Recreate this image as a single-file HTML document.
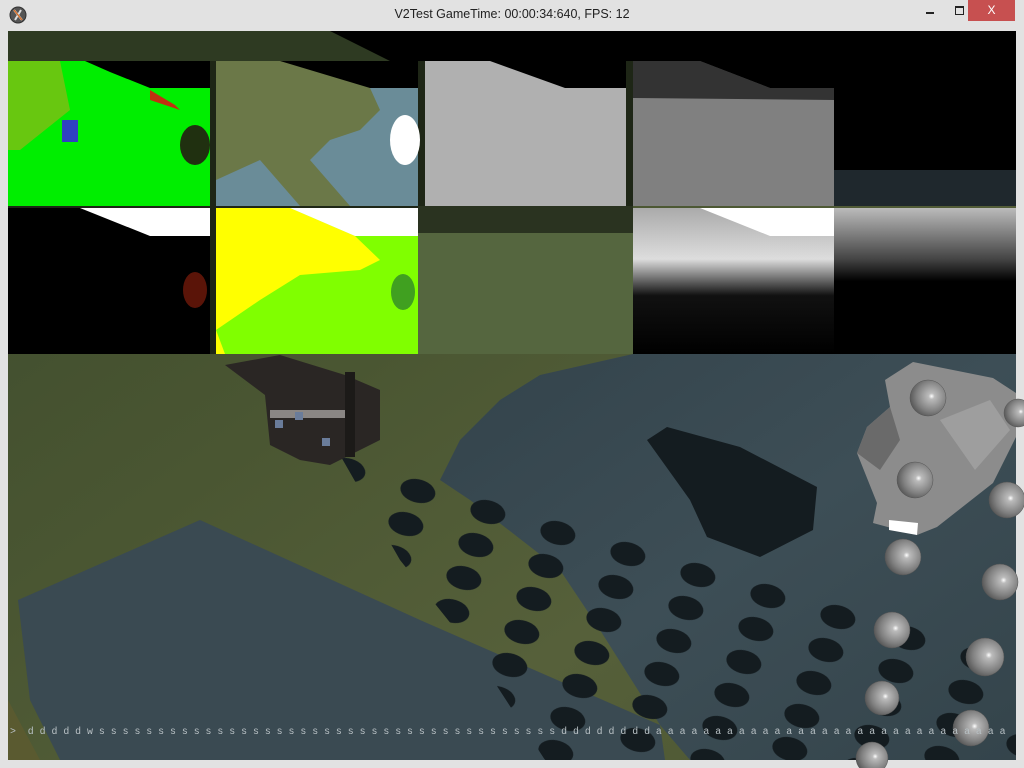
<!DOCTYPE html>
<html><head><meta charset="utf-8"><style>
html,body{margin:0;padding:0;width:1024px;height:768px;overflow:hidden;background:#e2e2e2;font-family:"Liberation Sans",sans-serif}
#title{position:absolute;left:0;top:0;width:1024px;height:31px;background:#e2e2e2;}
#title .t{position:absolute;left:0;width:1024px;top:7px;text-align:center;font-size:12.5px;color:#222}
#close{position:absolute;left:968px;top:0;width:47px;height:21px;background:#c75050;color:#fff;font-size:12px;text-align:center;line-height:21px}
#cmd{position:absolute;left:10px;top:726px;font-family:"Liberation Mono",monospace;font-size:9.9px;color:#b8c0c4;white-space:pre;letter-spacing:0}
</style></head><body>
<div id="title">
<svg width="20" height="20" style="position:absolute;left:9px;top:6px"><circle cx="9" cy="9" r="8" fill="#555"/><circle cx="9" cy="9" r="8" fill="none" stroke="#333"/><path d="M5 4 L13 14 M12 4 L6 14" stroke="#ddd" stroke-width="2"/><path d="M5 4 L13 14" stroke="#d86a20" stroke-width="1.4"/></svg>
<div class="t">V2Test GameTime: 00:00:34:640, FPS: 12</div>
<div style="position:absolute;left:926px;top:12px;width:8px;height:2px;background:#222"></div>
<div style="position:absolute;left:955px;top:6px;width:7px;height:6px;border:1px solid #222;border-top-width:2px"></div>
<div id="close">X</div>
</div>
<svg width="1024" height="768" style="position:absolute;left:0;top:0" xmlns="http://www.w3.org/2000/svg">
<defs>
<linearGradient id="grass" x1="0" y1="0" x2="1" y2="1"><stop offset="0" stop-color="#3c4a2c"/><stop offset="0.4" stop-color="#4a5632"/><stop offset="0.7" stop-color="#56603a"/><stop offset="1" stop-color="#4a5430"/></linearGradient>
<linearGradient id="water" x1="0" y1="0" x2="1" y2="1"><stop offset="0" stop-color="#33434b"/><stop offset="0.5" stop-color="#3d4e56"/><stop offset="1" stop-color="#34444b"/></linearGradient>
<radialGradient id="sph" cx="0.6" cy="0.45" r="0.7"><stop offset="0" stop-color="#fff"/><stop offset="0.12" stop-color="#bbb"/><stop offset="0.6" stop-color="#808080"/><stop offset="1" stop-color="#444"/></radialGradient>
<linearGradient id="depth1" x1="0" y1="0" x2="0" y2="1"><stop offset="0" stop-color="#aaa"/><stop offset="0.35" stop-color="#ddd"/><stop offset="0.6" stop-color="#111"/><stop offset="1" stop-color="#000"/></linearGradient>
<linearGradient id="depth2" x1="0" y1="0" x2="0" y2="1"><stop offset="0" stop-color="#bbb"/><stop offset="0.35" stop-color="#444"/><stop offset="0.5" stop-color="#000"/><stop offset="1" stop-color="#000"/></linearGradient>
<pattern id="dots" width="70" height="33" patternUnits="userSpaceOnUse" patternTransform="translate(6.8 20.5) matrix(1,0.3,-0.364,1,0,0)"><ellipse cx="35" cy="16" rx="17" ry="11" fill="#141c20"/></pattern>
<clipPath id="dclip"><polygon points="340,455 640,535 860,600 1016,650 1016,760 545,760 480,660 400,560"/></clipPath>
</defs>
<rect x="8" y="31" width="1008" height="729" fill="url(#grass)"/>
<rect x="8" y="31" width="1008" height="30" fill="#000"/>
<polygon points="8,31 330,31 390,61 8,61" fill="#2e3a22"/>
<rect x="8" y="61" width="625" height="293" fill="#1e2616"/>
<polygon points="633,354 1016,354 1016,760 690,760 660,725 600,630 560,570 470,500 440,480 460,440 500,400 540,375" fill="url(#water)"/>
<polygon points="18,600 200,520 420,620 660,725 665,760 60,760 30,700" fill="#3a4a52"/>
<polygon points="8,700 40,760 8,760" fill="#5a5a30"/>
<rect x="340" y="455" width="676" height="305" fill="url(#dots)" clip-path="url(#dclip)"/>
<polygon points="647,440 667,427 740,447 817,487 813,530 760,557 707,537 690,500" fill="#141c20"/>
<polygon points="225,365 280,355 345,375 380,390 380,440 330,465 300,460 270,445 265,395" fill="#2a2624"/>
<rect x="345" y="372" width="10" height="85" fill="#1c1a18"/>
<rect x="270" y="410" width="75" height="8" fill="#8a8684"/>
<rect x="275" y="420" width="8" height="8" fill="#6a7c9a"/><rect x="295" y="412" width="8" height="8" fill="#6a7c9a"/><rect x="322" y="438" width="8" height="8" fill="#6a7c9a"/>
<polygon points="885,380 913,362 993,378 1016,393 1016,437 993,483 937,527 917,535 873,523 877,503 857,453 867,427 890,407" fill="#8c8c8c"/>
<polygon points="857,453 867,427 890,407 900,440 880,470" fill="#6a6a6a"/>
<polygon points="940,420 990,400 1010,430 975,470" fill="#9e9e9e"/>
<polygon points="889,520 918,523 917,535 889,530" fill="#fff"/>
<g fill="url(#sph)" stroke="#555" stroke-width="0.5">
<circle cx="928" cy="398" r="18"/><circle cx="915" cy="480" r="18"/><circle cx="903" cy="557" r="18"/><circle cx="1007" cy="500" r="18"/><circle cx="1000" cy="582" r="18"/><circle cx="892" cy="630" r="18"/><circle cx="985" cy="657" r="19"/><circle cx="882" cy="698" r="17"/><circle cx="971" cy="728" r="18"/><circle cx="872" cy="758" r="16"/><circle cx="1018" cy="413" r="14"/>
</g>
<rect x="8" y="61" width="202" height="145" fill="#00ee00"/>
<polygon points="8,61 60,61 70,110 20,150 8,150" fill="#d0a020" opacity="0.5"/>
<polygon points="85,61 210,61 210,88 150,88 110,72" fill="#000"/>
<polygon points="150,90 175,105 180,110 150,100" fill="#c03010"/>
<rect x="62" y="120" width="16" height="22" fill="#3040c0"/><ellipse cx="195" cy="145" rx="15" ry="20" fill="#203010"/>
<rect x="216" y="61" width="202" height="145" fill="#6b7848"/>
<polygon points="280,61 418,61 418,88 370,88" fill="#000"/>
<polygon points="370,88 418,88 418,206 350,206 310,160 330,140 360,130 380,110" fill="#6a8c98"/>
<polygon points="216,180 260,160 300,206 216,206" fill="#6a8c98"/>
<ellipse cx="405" cy="140" rx="15" ry="25" fill="#fff"/>
<rect x="425" y="61" width="201" height="145" fill="#b0b0b0"/>
<polygon points="425,61 490,61 565,88 626,88 626,61" fill="#000"/>
<rect x="633" y="61" width="201" height="145" fill="#808080"/>
<polygon points="633,61 700,61 770,88 834,88 834,100 633,98" fill="#333"/>
<polygon points="700,61 834,61 834,88 770,88" fill="#000"/>
<rect x="834" y="61" width="182" height="109" fill="#000"/>
<rect x="834" y="170" width="182" height="36" fill="#1f282d"/>
<rect x="8" y="208" width="202" height="146" fill="#000"/>
<polygon points="80,208 210,208 210,236 150,236" fill="#fff"/>
<ellipse cx="195" cy="290" rx="12" ry="18" fill="#5a1408"/>
<rect x="216" y="208" width="202" height="146" fill="#80ff00"/>
<polygon points="216,208 290,208 355,236 380,260 360,270 300,275 260,300 216,330" fill="#ffff00"/>
<polygon points="290,208 418,208 418,236 355,236" fill="#fff"/>
<polygon points="216,330 225,354 216,354" fill="#ffff00"/>
<ellipse cx="403" cy="292" rx="12" ry="18" fill="#40a020"/>
<rect x="418" y="206" width="215" height="27" fill="#2a3320"/>
<rect x="418" y="233" width="215" height="121" fill="#55663f"/>
<rect x="633" y="208" width="201" height="146" fill="url(#depth1)"/>
<polygon points="700,208 834,208 834,236 770,236" fill="#fff"/>
<rect x="834" y="208" width="182" height="146" fill="url(#depth2)"/>
</svg>
<div id="cmd">&gt;  d d d d d w s s s s s s s s s s s s s s s s s s s s s s s s s s s s s s s s s s s s s s s d d d d d d d d a a a a a a a a a a a a a a a a a a a a a a a a a a a a a a</div>
</body></html>
